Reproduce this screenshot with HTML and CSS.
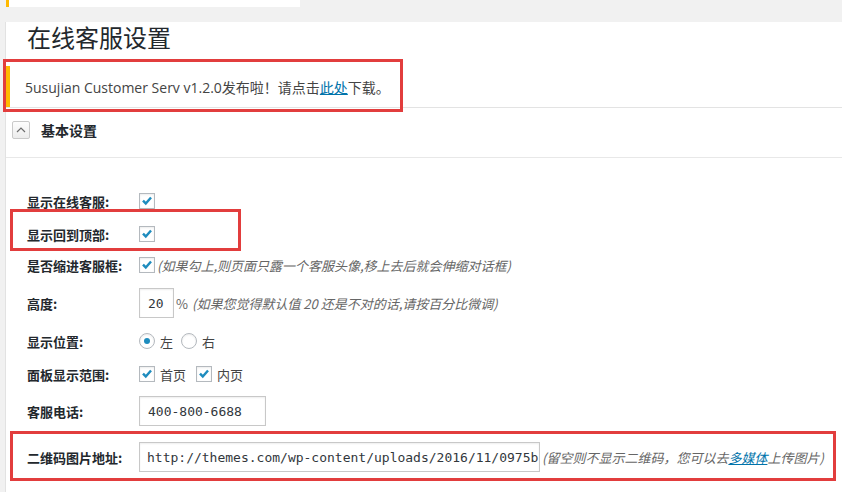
FILE: index.html
```html
<!DOCTYPE html>
<html lang="zh-CN">
<head>
  <meta charset="UTF-8" />
  <meta name="viewport" content="width=device-width, initial-scale=1.0"/>
  <title>在线客服设置</title>
  <link rel="stylesheet" href="styles.css">
</head>
<body>
<div class="prev-notice"></div>

<div class="wrap">
  <h1 class="page-title">在线客服设置</h1>

  <div class="notice">
    <p>5usujian Customer Serv v1.2.0发布啦！请点击<a href="#">此处</a>下载。</p>
    <span class="mark mark-notice"></span>
  </div>

  <div class="postbox">
    <div class="postbox-header">
      <button class="toggle">
        <svg viewBox="0 0 16 16" width="16" height="16"><polyline points="4,10 8,6 12,10" /></svg>
      </button>
      <h2>基本设置</h2>
    </div>

    <div class="postbox-body">
      <div class="row row-show">
        <label class="row-label">显示在线客服:</label>
        <span class="cb"><svg viewBox="0 0 16 16"><path d="M3.4 7.6 L6.6 10.8 L12.6 4" /></svg></span>
      </div>

      <div class="row row-top">
        <label class="row-label">显示回到顶部:</label>
        <span class="cb"><svg viewBox="0 0 16 16"><path d="M3.4 7.6 L6.6 10.8 L12.6 4" /></svg></span>
        <span class="mark mark-top"></span>
      </div>

      <div class="row row-shrink">
        <label class="row-label">是否缩进客服框:</label>
        <span class="cb"><svg viewBox="0 0 16 16"><path d="M3.4 7.6 L6.6 10.8 L12.6 4" /></svg></span>
        <span class="desc">(如果勾上,则页面只露一个客服头像,移上去后就会伸缩对话框)</span>
      </div>

      <div class="row row-height">
        <label class="row-label">高度:</label>
        <input class="text-input input-small" type="text" value="20" />
        <span class="unit">%</span>
        <span class="desc">(如果您觉得默认值 20 还是不对的话,请按百分比微调)</span>
      </div>

      <div class="row row-pos">
        <label class="row-label">显示位置:</label>
        <span class="radio checked"></span><span class="opt">左</span>
        <span class="radio"></span><span class="opt">右</span>
      </div>

      <div class="row row-range">
        <label class="row-label">面板显示范围:</label>
        <span class="cb"><svg viewBox="0 0 16 16"><path d="M3.4 7.6 L6.6 10.8 L12.6 4" /></svg></span><span class="opt">首页</span>
        <span class="cb"><svg viewBox="0 0 16 16"><path d="M3.4 7.6 L6.6 10.8 L12.6 4" /></svg></span><span class="opt">内页</span>
      </div>

      <div class="row row-phone">
        <label class="row-label">客服电话:</label>
        <input class="text-input input-phone" type="text" value="400-800-6688" />
      </div>

      <div class="row row-qr">
        <label class="row-label">二维码图片地址:</label>
        <input class="text-input input-url" type="text" value="http://themes.com/wp-content/uploads/2016/11/0975b" />
        <span class="desc">(留空则不显示二维码，您可以去<a href="#">多媒体</a>上传图片)</span>
        <span class="mark mark-qr"></span>
      </div>
    </div>
  </div>
</div>
</body>
</html>
```

FILE: styles.css
```css
body {
  margin: 0;
  background: #f1f1f1;
  font-family: "Noto Sans CJK SC", "Open Sans", sans-serif;
  color: #23282d;
  overflow: hidden;
}

.prev-notice {
  margin-left: 6px;
  width: 291px;
  height: 7px;
  background: #fff;
  border-left: 3px solid #ffb900;
}

.wrap {
  margin-left: 5px;
  background: #fff;
  border-left: 1px solid #e2e2e2;
  height: 485px;
}

.page-title {
  margin: 15px 0 0;
  padding-left: 21px;
  font-size: 24px;
  line-height: 30px;
  font-weight: 400;
  color: #23282d;
}

/* update notice */
.notice {
  position: relative;
  margin-top: 14px;
  width: 391px;
  height: 41px;
  box-sizing: border-box;
  border-left: 4px solid #ffb900;
  background: #fff;
}

.notice p {
  margin: 0;
  padding: 12px 0 9px 15px;
  font-family: "Open Sans", "Noto Sans CJK SC", sans-serif;
  font-size: 14px;
  line-height: 20px;
  color: #444;
  white-space: nowrap;
}

.notice a,
.desc a {
  color: #0073aa;
  text-decoration: underline;
}

/* red highlight boxes */
.mark {
  position: absolute;
  border: 3px solid #e23d3d;
  z-index: 2;
  pointer-events: none;
}

.mark-notice {
  top: -7px;
  left: -7px;
  right: -6px;
  bottom: -5px;
}

.mark-top {
  top: -8px;
  bottom: 0;
  left: 4px;
  width: 225px;
}

.mark-qr {
  top: 2px;
  bottom: 4px;
  left: 4px;
  width: 820px;
}

/* settings box */
.postbox {
  border-top: 1px solid #e3e3e3;
}

.postbox-header {
  height: 50px;
  display: flex;
  align-items: flex-start;
  padding: 13px 0 0 6px;
  box-sizing: border-box;
  border-bottom: 1px solid #e8e8e8;
}

.toggle {
  width: 18px;
  height: 18px;
  padding: 0;
  border: 1px solid #c9c9c9;
  border-radius: 2px;
  background: linear-gradient(#fdfdfd, #ececec);
  display: flex;
  align-items: center;
  justify-content: center;
}

.toggle svg {
  fill: none;
  stroke: #6d6d6d;
  stroke-width: 1.2;
}

.postbox-header h2 {
  margin: 0 0 0 11px;
  font-size: 14px;
  line-height: 18px;
  font-weight: 700;
  color: #23282d;
}

.postbox-body {
  padding-top: 27px;
}

.row {
  position: relative;
  display: flex;
  align-items: center;
  padding-left: 21px;
  font-size: 13px;
}

.row-show { height: 32px; }
.row-top { height: 34px; }
.row-shrink { height: 28px; }
.row-height { height: 48px; }
.row-pos { height: 28px; }
.row-range { height: 38px; }
.row-phone { height: 36px; }
.row-qr { height: 56px; }

.row-label {
  width: 112px;
  flex-shrink: 0;
  font-weight: 700;
  color: #23282d;
}

.cb {
  width: 16px;
  height: 16px;
  box-sizing: border-box;
  border: 1px solid #b4b9be;
  background: #fff;
  box-shadow: inset 0 1px 2px rgba(0, 0, 0, 0.08);
  display: inline-flex;
  flex-shrink: 0;
}

.cb svg {
  width: 14px;
  height: 14px;
  fill: none;
  stroke: #1e8cbe;
  stroke-width: 2.8;
}

.radio {
  width: 16px;
  height: 16px;
  box-sizing: border-box;
  border: 1px solid #b4b9be;
  border-radius: 50%;
  background: #fff;
  box-shadow: inset 0 1px 2px rgba(0, 0, 0, 0.08);
  display: inline-flex;
  align-items: center;
  justify-content: center;
  flex-shrink: 0;
}

.radio.checked::after {
  content: "";
  width: 6px;
  height: 6px;
  border-radius: 50%;
  background: #1e8cbe;
}

.opt {
  margin: 0 10px 0 5px;
  color: #444;
}

.row-pos .opt {
  margin: 0 8px 0 5px;
}

.text-input {
  height: 30px;
  box-sizing: border-box;
  border: 1px solid #c8c8c8;
  box-shadow: inset 0 1px 2px rgba(0, 0, 0, 0.07);
  padding: 0 8px;
  font-family: "DejaVu Sans Mono", "Liberation Mono", monospace;
  font-size: 13px;
  color: #32373c;
  margin: 0;
  outline: none;
}

.input-small { width: 35px; }
.input-phone { width: 127px; }
.input-url { width: 401px; padding: 0 0 0 7px; }

.unit {
  margin-left: 2px;
  color: #666;
}

.desc {
  margin-left: 2px;
  font-style: italic;
  color: #666;
  white-space: nowrap;
}

.row-height .desc {
  margin-left: 4px;
}
```
